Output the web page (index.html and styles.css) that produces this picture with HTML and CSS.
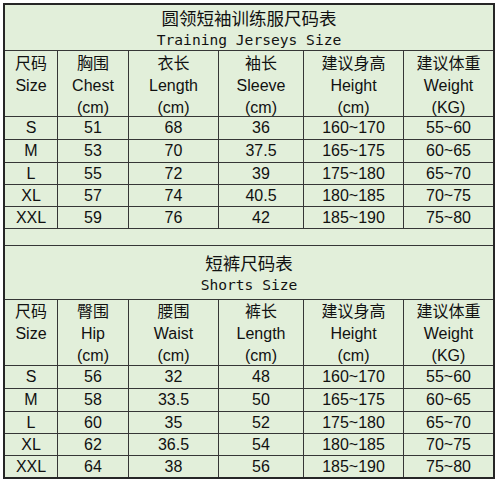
FILE: index.html
```html
<!DOCTYPE html>
<html lang="zh">
<head>
<meta charset="utf-8">
<title>尺码表</title>
<link rel="stylesheet" href="styles.css">
</head>
<body>
<div class="chart">
  <div class="cell title t1">
    <div class="zh-title">圆领短袖训练服尺码表</div>
    <div class="en-title">Training Jerseys Size</div>
  </div>

  <div class="cell head h1"><span>尺码</span><span>Size</span><span>&nbsp;</span></div>
  <div class="cell head h1"><span>胸围</span><span>Chest</span><span>(cm)</span></div>
  <div class="cell head h1"><span>衣长</span><span>Length</span><span>(cm)</span></div>
  <div class="cell head h1"><span>袖长</span><span>Sleeve</span><span>(cm)</span></div>
  <div class="cell head h1"><span>建议身高</span><span>Height</span><span>(cm)</span></div>
  <div class="cell head h1"><span>建议体重</span><span>Weight</span><span>(KG)</span></div>

  <div class="cell">S</div><div class="cell">51</div><div class="cell">68</div><div class="cell">36</div><div class="cell">160~170</div><div class="cell">55~60</div>
  <div class="cell">M</div><div class="cell">53</div><div class="cell">70</div><div class="cell">37.5</div><div class="cell">165~175</div><div class="cell">60~65</div>
  <div class="cell">L</div><div class="cell">55</div><div class="cell">72</div><div class="cell">39</div><div class="cell">175~180</div><div class="cell">65~70</div>
  <div class="cell">XL</div><div class="cell">57</div><div class="cell">74</div><div class="cell">40.5</div><div class="cell">180~185</div><div class="cell">70~75</div>
  <div class="cell">XXL</div><div class="cell">59</div><div class="cell">76</div><div class="cell">42</div><div class="cell">185~190</div><div class="cell">75~80</div>

  <div class="cell span"></div>

  <div class="cell title t2">
    <div class="zh-title">短裤尺码表</div>
    <div class="en-title">Shorts Size</div>
  </div>

  <div class="cell head h2"><span>尺码</span><span>Size</span><span>&nbsp;</span></div>
  <div class="cell head h2"><span>臀围</span><span>Hip</span><span>(cm)</span></div>
  <div class="cell head h2"><span>腰围</span><span>Waist</span><span>(cm)</span></div>
  <div class="cell head h2"><span>裤长</span><span>Length</span><span>(cm)</span></div>
  <div class="cell head h2"><span>建议身高</span><span>Height</span><span>(cm)</span></div>
  <div class="cell head h2"><span>建议体重</span><span>Weight</span><span>(KG)</span></div>

  <div class="cell">S</div><div class="cell">56</div><div class="cell">32</div><div class="cell">48</div><div class="cell">160~170</div><div class="cell">55~60</div>
  <div class="cell">M</div><div class="cell">58</div><div class="cell">33.5</div><div class="cell">50</div><div class="cell">165~175</div><div class="cell">60~65</div>
  <div class="cell">L</div><div class="cell">60</div><div class="cell">35</div><div class="cell">52</div><div class="cell">175~180</div><div class="cell">65~70</div>
  <div class="cell">XL</div><div class="cell">62</div><div class="cell">36.5</div><div class="cell">54</div><div class="cell">180~185</div><div class="cell">70~75</div>
  <div class="cell">XXL</div><div class="cell">64</div><div class="cell">38</div><div class="cell">56</div><div class="cell">185~190</div><div class="cell">75~80</div>
</div>
</body>
</html>
```

FILE: styles.css
```css
html, body {
  margin: 0;
  padding: 0;
  background: #ffffff;
}

body {
  padding: 3px 0 0 3px;
}

.chart {
  display: grid;
  grid-template-columns: 52px 70px 89px 84px 99px 89px;
  grid-template-rows: 45px 65px 22px 22px 21px 21px 21px 16px 53px 65px 22px 22px 21px 21px 21px;
  gap: 1px;
  width: max-content;
  background: #363636;
  border: 2px solid #262626;
  font-family: "Liberation Sans", "Noto Sans CJK SC", sans-serif;
  font-size: 16px;
  color: #111111;
}

.cell {
  background: #e2efda;
  display: flex;
  align-items: center;
  justify-content: center;
  line-height: 22px;
  white-space: nowrap;
}

.span {
  grid-column: 1 / -1;
}

.title {
  grid-column: 1 / -1;
  flex-direction: column;
  justify-content: flex-start;
}

.t1 {
  padding-top: 2px;
}

.t2 {
  padding-top: 6px;
}

.zh-title {
  font-family: "Noto Sans CJK SC", sans-serif;
  font-size: 17.5px;
  line-height: 22px;
}

.en-title {
  font-family: "DejaVu Sans Mono", "Liberation Mono", monospace;
  font-size: 14.6px;
  line-height: 22px;
}

.head {
  flex-direction: column;
  justify-content: flex-start;
}

.head span {
  display: block;
  line-height: 22px;
  height: 22px;
}

.h1 {
  padding-top: 2px;
}

.h2 {
  padding-top: 1px;
}
```
